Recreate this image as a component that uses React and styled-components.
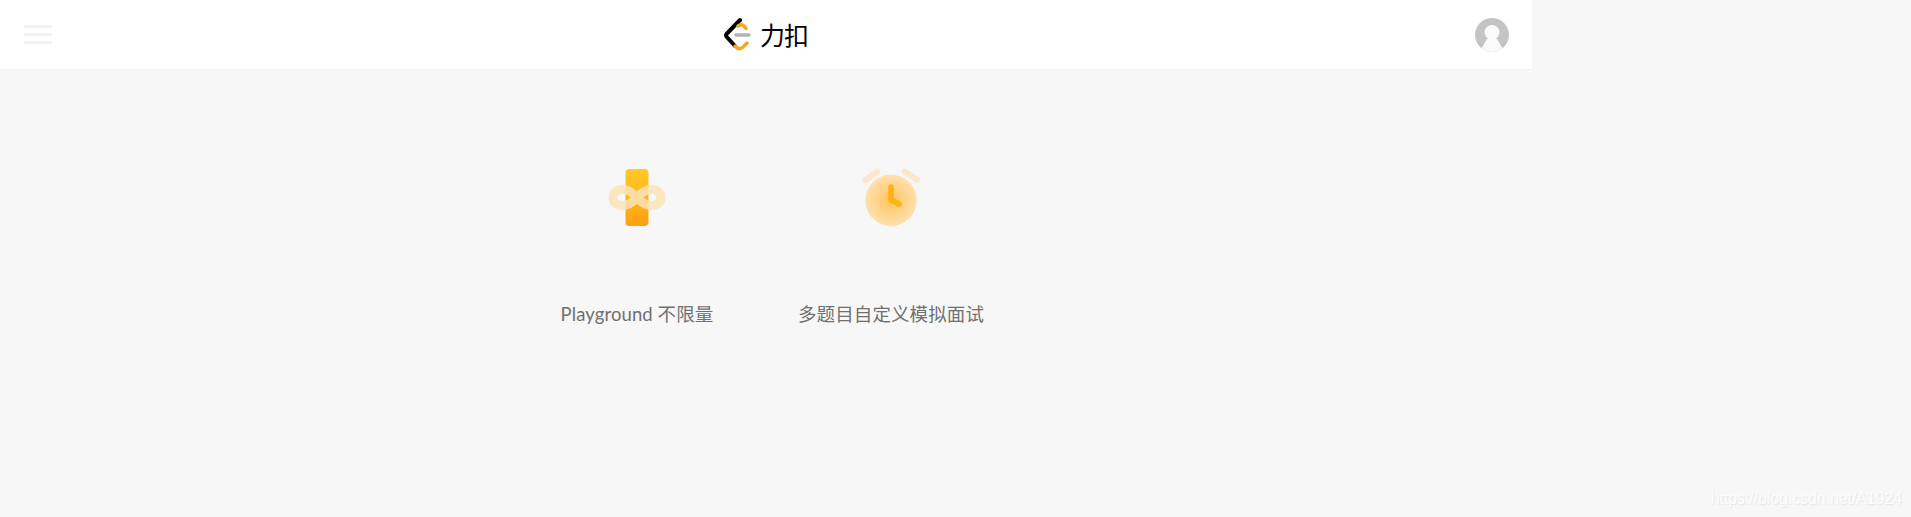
import React from 'react'
import styled, { createGlobalStyle } from 'styled-components'

const GlobalStyle = createGlobalStyle`
    html, body {
        margin: 0;
        padding: 0;
        height: 100%;
        background: #f7f7f7;
        overflow: hidden;
    }
    #root {
        height: 100%;
    }
`

function Logo() {
    return (
        <svg width="30" height="36" viewBox="0 0 30 36" fill="none">
            <path d="M17 3 L3.500 17 Q2.500 18.500 3.800 20 L12 29" stroke="#000" strokeWidth="4" strokeLinecap="round" strokeLinejoin="round" />
            <path d="M15 9 Q19 6 22 10 L23 11.500" stroke="#f5a623" strokeWidth="3.500" strokeLinecap="round" />
            <path d="M12 29 Q16 33.500 19.500 30.500 L24 26" stroke="#f5a623" strokeWidth="3.500" strokeLinecap="round" />
            <path d="M13 18 H26" stroke="#b3b3b3" strokeWidth="3.500" strokeLinecap="round" />
        </svg>
    )
}

function Avatar() {
    return (
        <svg width="34" height="34" viewBox="0 0 34 34">
            <defs>
                <clipPath id="avatarClip"><circle cx="17" cy="17" r="17" /></clipPath>
            </defs>
            <circle cx="17" cy="17" r="17" fill="#c4c4c4" />
            <g clipPath="url(#avatarClip)">
                <circle cx="17" cy="14.500" r="7.500" fill="#fafafa" />
                <path d="M12 21 L6 31 V34 H28 V31 L22 21 Z" fill="#fafafa" />
            </g>
        </svg>
    )
}

function PlaygroundIcon() {
    return (
        <svg width="80" height="80" viewBox="0 0 80 80">
            <defs>
                <linearGradient id="barFill" x1="0" y1="0" x2="0" y2="1">
                    <stop offset="0" stopColor="#ffc928" />
                    <stop offset="1" stopColor="#ffa010" />
                </linearGradient>
            </defs>
            <rect x="28.500" y="12" width="23" height="57" rx="4" fill="url(#barFill)" />
            <path
                d="M40 40.500 C36 36 32 32.500 25.500 32.500 C19.500 32.500 16 36 16 40.500 C16 45 19.500 48.500 25.500 48.500 C32 48.500 36 45 40 40.500 C44 36 48 32.500 54.500 32.500 C60.500 32.500 64 36 64 40.500 C64 45 60.500 48.500 54.500 48.500 C48 48.500 44 45 40 40.500 Z"
                fill="none"
                stroke="#fbe3b8"
                strokeOpacity="0.85"
                strokeWidth="9"
            />
        </svg>
    )
}

function ClockIcon() {
    return (
        <svg width="80" height="80" viewBox="0 0 80 80">
            <defs>
                <radialGradient id="clockFill" cx="0.5" cy="0.5" r="0.5">
                    <stop offset="0" stopColor="#ffc45c" />
                    <stop offset="1" stopColor="#ffe0ae" />
                </radialGradient>
            </defs>
            <circle cx="40" cy="43.300" r="25.700" fill="url(#clockFill)" />
            <path d="M14.700 23 L26 14.700 M54 14.700 L66.300 23" stroke="#fce6cd" strokeWidth="6" strokeLinecap="round" />
            <path d="M40 30 V43 L48 47" fill="none" stroke="#ffb210" strokeWidth="5.500" strokeLinecap="round" strokeLinejoin="round" />
        </svg>
    )
}

const features = [
    { label: 'Playground 不限量', icon: <PlaygroundIcon /> },
    { label: '多题目自定义模拟面试', icon: <ClockIcon /> },
]

function App() {
    return (
        <Page>
            <GlobalStyle />
            <Header>
                <MenuButton>
                    <MenuLine />
                    <MenuLine />
                    <MenuLine />
                </MenuButton>
                <Brand>
                    <Logo />
                    <BrandName>力扣</BrandName>
                </Brand>
                <AvatarWrap>
                    <Avatar />
                </AvatarWrap>
            </Header>
            <Features>
                {features.map((item) => (
                    <Feature key={item.label}>
                        {item.icon}
                        <Label>{item.label}</Label>
                    </Feature>
                ))}
            </Features>
            <Watermark>https://blog.csdn.net/A1924</Watermark>
        </Page>
    )
}

const Page = styled.div`
    position: relative;
    height: 100%;
    background: #f7f7f7;
`
const Header = styled.header`
    box-sizing: border-box;
    width: 1532px;
    height: 70px;
    padding: 0 23px 0 24px;
    display: flex;
    align-items: center;
    justify-content: space-between;
    background: #fff;
    border-bottom: 1px solid #f0f0f0;
`
const MenuButton = styled.div`
    width: 28px;
    display: flex;
    flex-direction: column;
    gap: 5px;
`
const MenuLine = styled.span`
    display: block;
    height: 3px;
    background: #f1f1f1;
`
const Brand = styled.div`
    display: flex;
    align-items: center;
    gap: 7px;
    margin-left: 4px;
`
const BrandName = styled.span`
    font-family: "Noto Sans CJK SC", sans-serif;
    font-size: 25px;
    line-height: 30px;
    font-weight: 400;
    letter-spacing: -1px;
    color: #000;
    margin-top: -2px;
`
const AvatarWrap = styled.div`
    display: flex;
`
const Features = styled.main`
    box-sizing: border-box;
    width: 1532px;
    padding: 87px 4px 0 0;
    display: flex;
    justify-content: center;
`
const Feature = styled.div`
    width: 254px;
    display: flex;
    flex-direction: column;
    align-items: center;
`
const Label = styled.div`
    margin-top: 65px;
    font-family: Lato, "Noto Sans CJK SC", sans-serif;
    font-size: 18.500px;
    letter-spacing: 0.1px;
    line-height: 24px;
    color: #707070;
    white-space: nowrap;
`
const Watermark = styled.div`
    position: absolute;
    right: 9px;
    bottom: 8px;
    font-family: "Liberation Sans", sans-serif;
    font-size: 16px;
    letter-spacing: -0.1px;
    line-height: 20px;
    color: #fdfdfd;
    text-shadow: 1px 1px 1px #e6e6e6;
`

export default App
